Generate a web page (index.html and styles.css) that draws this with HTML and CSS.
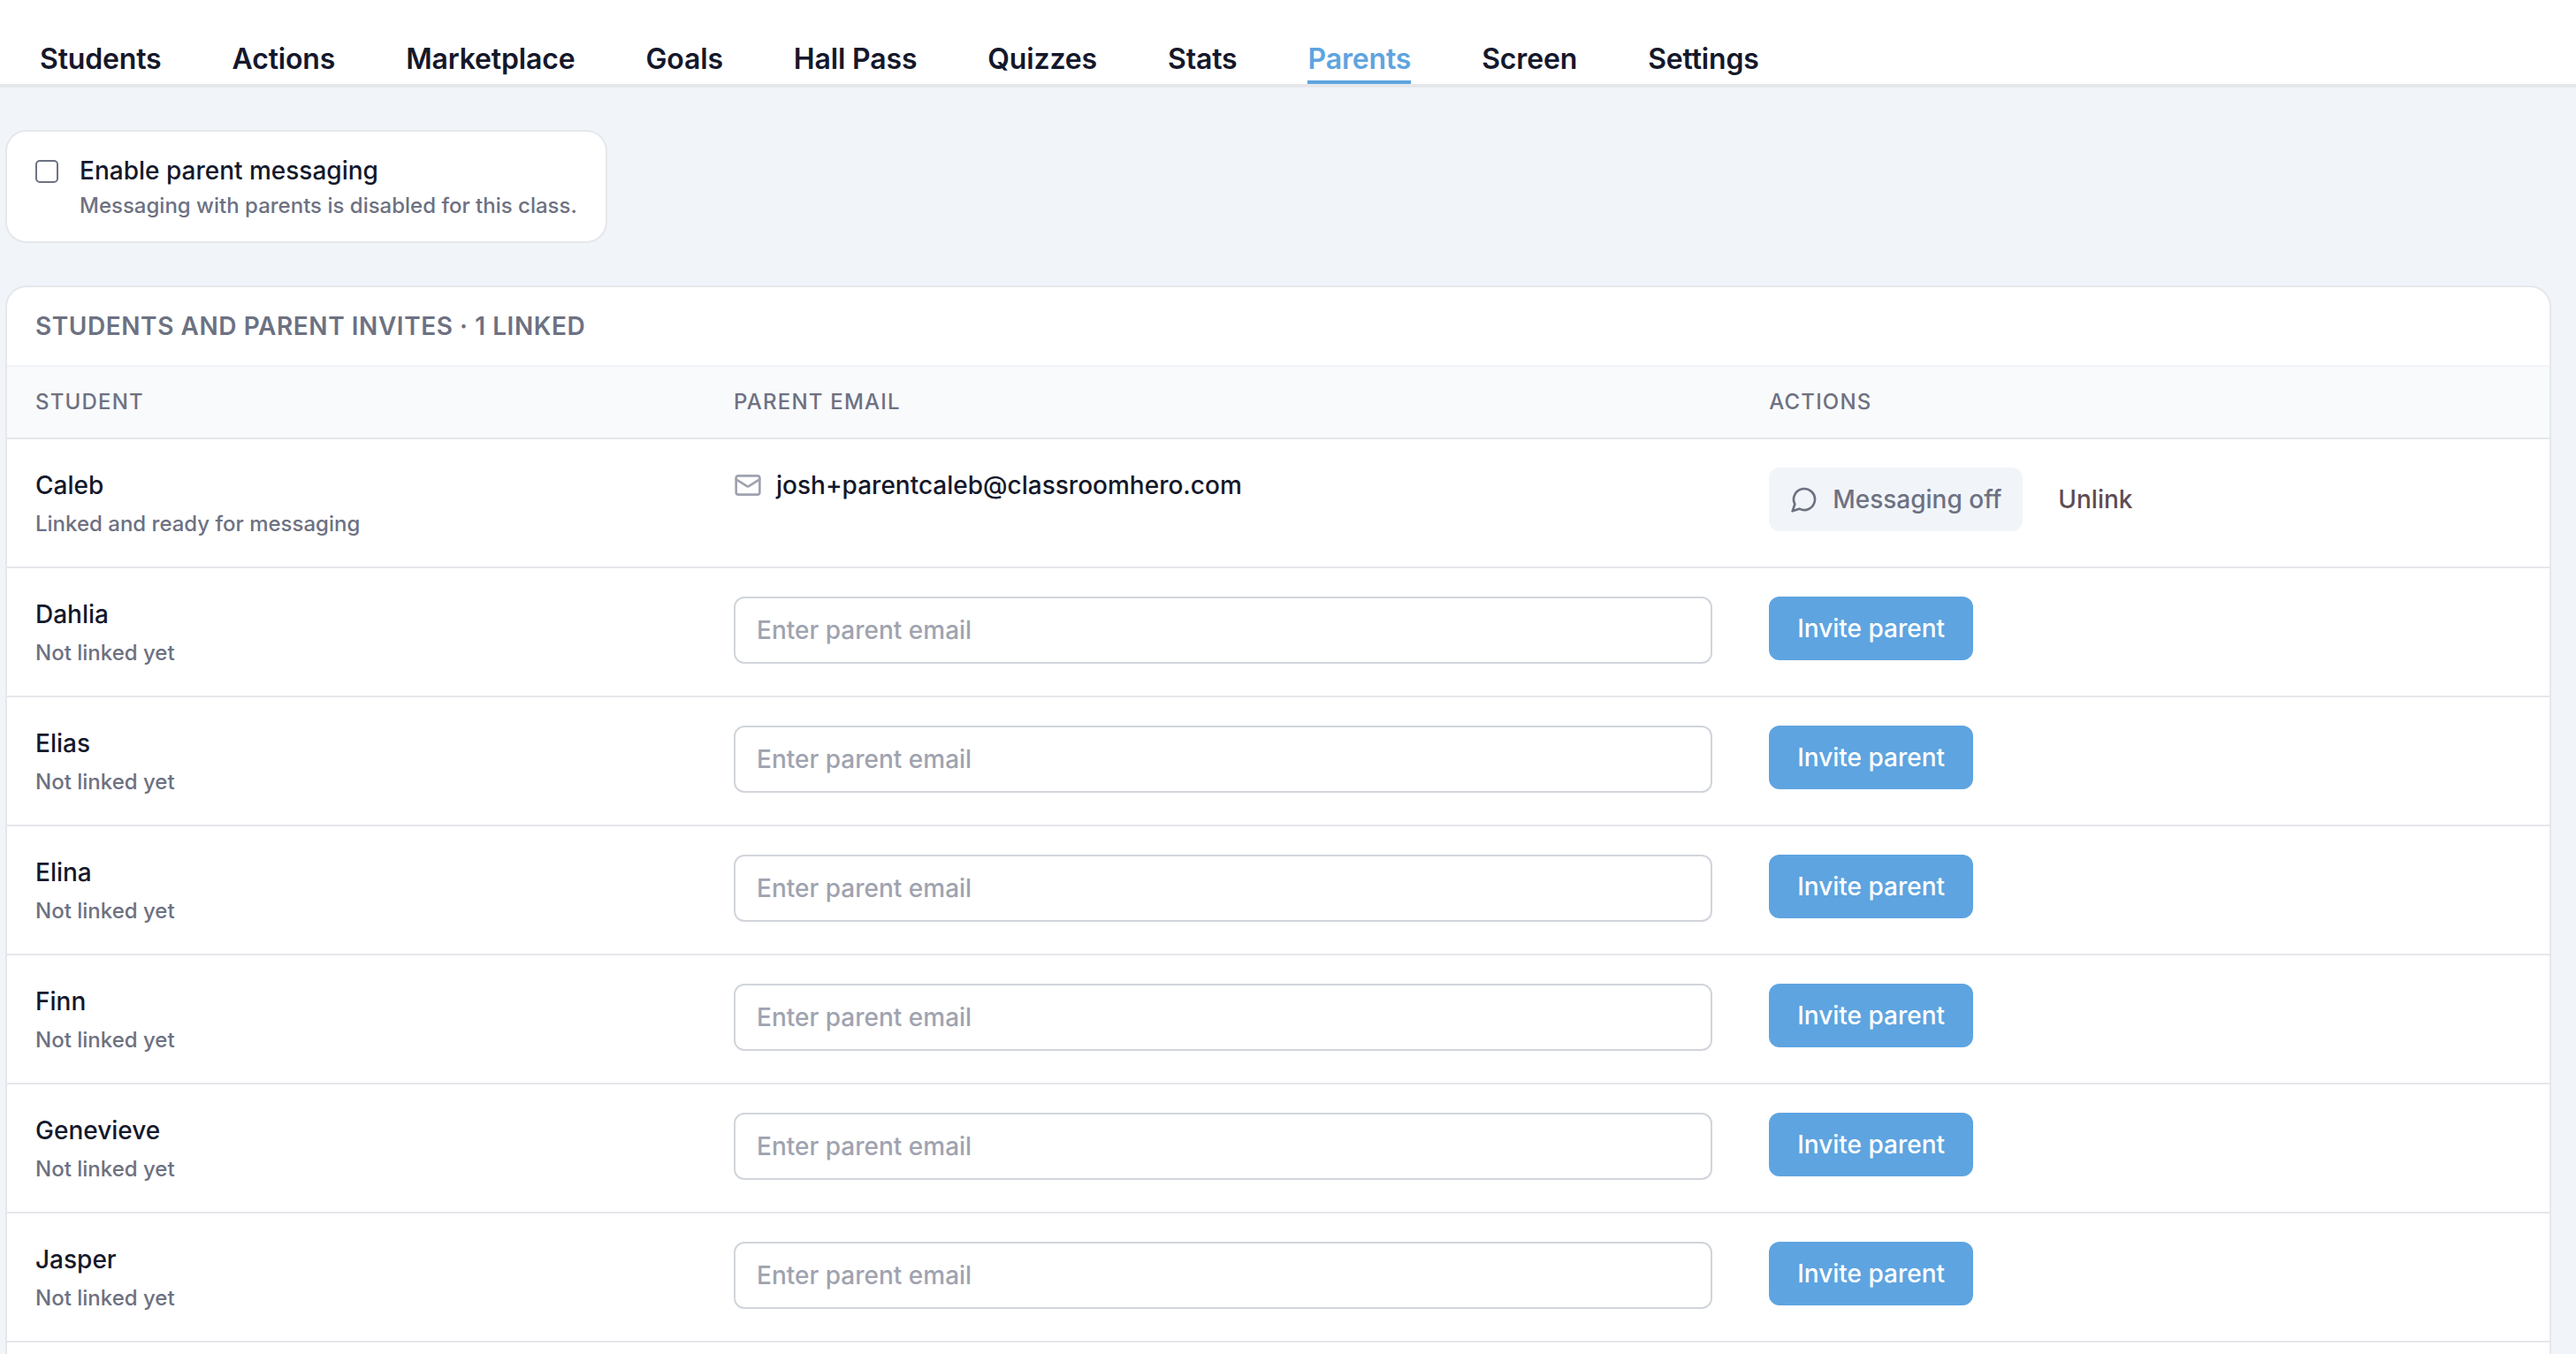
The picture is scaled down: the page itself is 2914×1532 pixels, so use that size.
FILE: index.html
```html
<!DOCTYPE html>
<html lang="en">

<head>
    <meta charset="utf-8" />
    <meta name="viewport" content="width=device-width, initial-scale=1.0" />
    <title>Parents</title>
    <link rel="stylesheet" href="styles.css">
</head>

<body>
    <header class="topbar">
        <nav class="tabs">
            <a class="tab" href="#students">Students</a>
            <a class="tab" href="#actions">Actions</a>
            <a class="tab" href="#marketplace">Marketplace</a>
            <a class="tab" href="#goals">Goals</a>
            <a class="tab" href="#hall-pass">Hall Pass</a>
            <a class="tab" href="#quizzes">Quizzes</a>
            <a class="tab" href="#stats">Stats</a>
            <a class="tab active" href="#parents" aria-current="page">Parents</a>
            <a class="tab" href="#screen">Screen</a>
            <a class="tab" href="#settings">Settings</a>
        </nav>
    </header>

    <main class="content">
        <div class="messaging-card">
            <input type="checkbox" id="enableMessaging" class="checkbox" aria-describedby="messagingHint">
            <div>
                <label class="name" for="enableMessaging">Enable parent messaging</label>
                <div class="messaging-hint" id="messagingHint">Messaging with parents is disabled for this class.</div>
            </div>
        </div>

        <section class="invites">
            <h2 class="invites-title">Students and parent invites · 1 linked</h2>
            <table class="invites-table">
                <colgroup>
                    <col class="col-student">
                    <col class="col-email">
                    <col class="col-actions">
                </colgroup>
                <thead>
                    <tr>
                        <th scope="col">Student</th>
                        <th scope="col">Parent email</th>
                        <th scope="col">Actions</th>
                    </tr>
                </thead>
                <tbody>
                    <tr>
                        <td>
                            <div class="name">Caleb</div>
                            <div class="status">Linked and ready for messaging</div>
                        </td>
                        <td>
                            <div class="linked-email">
                                <svg class="icon icon-mail" viewBox="0 0 24 24" aria-hidden="true">
                                    <rect x="2" y="4" width="20" height="16" rx="2" />
                                    <path d="m22 7-8.97 5.7a1.94 1.94 0 0 1-2.06 0L2 7" />
                                </svg>
                                <span>josh+parentcaleb@classroomhero.com</span>
                            </div>
                        </td>
                        <td>
                            <div class="actions">
                                <button type="button" class="btn btn-muted">
                                    <svg class="icon" viewBox="0 0 24 24" aria-hidden="true">
                                        <path d="M7.9 20A9 9 0 1 0 4 16.1L2 22Z" />
                                    </svg>
                                    Messaging off
                                </button>
                                <button type="button" class="btn btn-unlink">Unlink</button>
                            </div>
                        </td>
                    </tr>
                    <tr>
                        <td>
                            <div class="name">Dahlia</div>
                            <div class="status">Not linked yet</div>
                        </td>
                        <td><input type="email" class="email-input" placeholder="Enter parent email" aria-label="Parent email for Dahlia"></td>
                        <td><button type="button" class="btn btn-invite">Invite parent</button></td>
                    </tr>
                    <tr>
                        <td>
                            <div class="name">Elias</div>
                            <div class="status">Not linked yet</div>
                        </td>
                        <td><input type="email" class="email-input" placeholder="Enter parent email" aria-label="Parent email for Elias"></td>
                        <td><button type="button" class="btn btn-invite">Invite parent</button></td>
                    </tr>
                    <tr>
                        <td>
                            <div class="name">Elina</div>
                            <div class="status">Not linked yet</div>
                        </td>
                        <td><input type="email" class="email-input" placeholder="Enter parent email" aria-label="Parent email for Elina"></td>
                        <td><button type="button" class="btn btn-invite">Invite parent</button></td>
                    </tr>
                    <tr>
                        <td>
                            <div class="name">Finn</div>
                            <div class="status">Not linked yet</div>
                        </td>
                        <td><input type="email" class="email-input" placeholder="Enter parent email" aria-label="Parent email for Finn"></td>
                        <td><button type="button" class="btn btn-invite">Invite parent</button></td>
                    </tr>
                    <tr>
                        <td>
                            <div class="name">Genevieve</div>
                            <div class="status">Not linked yet</div>
                        </td>
                        <td><input type="email" class="email-input" placeholder="Enter parent email" aria-label="Parent email for Genevieve"></td>
                        <td><button type="button" class="btn btn-invite">Invite parent</button></td>
                    </tr>
                    <tr>
                        <td>
                            <div class="name">Jasper</div>
                            <div class="status">Not linked yet</div>
                        </td>
                        <td><input type="email" class="email-input" placeholder="Enter parent email" aria-label="Parent email for Jasper"></td>
                        <td><button type="button" class="btn btn-invite">Invite parent</button></td>
                    </tr>
                </tbody>
            </table>
        </section>
    </main>
</body>

</html>
```
FILE: styles.css
```css
* {
    box-sizing: border-box;
}

body {
    margin: 0;
    min-height: 100vh;
    display: flex;
    flex-direction: column;
    font-family: 'Inter', 'Liberation Sans', sans-serif;
    font-size: 28px;
    line-height: 40px;
    font-weight: 500;
    color: #14182b;
    background-color: #f1f5fa;
}

/* Top tabs */
.topbar {
    padding: 43px 45px 0;
    background: #ffffff;
    border-bottom: 4px solid #e5e7eb;
}

.tabs {
    display: flex;
    gap: 80px;
}

.tab {
    font-size: 32px;
    line-height: 48px;
    font-weight: 600;
    letter-spacing: -0.005em;
    color: inherit;
    text-decoration: none;
    white-space: nowrap;
    border-bottom: 4px solid transparent;
}

.tab.active {
    color: #5ea4e0;
    border-bottom-color: #5ea4e0;
}

.content {
    flex: 1;
    display: flex;
    flex-direction: column;
    align-items: flex-start;
    gap: 48px;
    padding: 48px 28px 0 6px;
}

/* Messaging switch */
.messaging-card {
    display: flex;
    align-items: flex-start;
    gap: 24px;
    padding: 24px 32px;
    background: #ffffff;
    border: 2px solid #e5e7eb;
    border-radius: 24px;
}

.messaging-card .name {
    display: block;
}

.messaging-hint {
    margin-top: 4px;
    font-size: 24px;
    line-height: 32px;
    color: #6d7182;
}

.checkbox {
    appearance: none;
    width: 26px;
    height: 26px;
    margin: 8px 0 0;
    background: #ffffff;
    border: 2px solid #6d7182;
    border-radius: 5px;
}

.checkbox:checked {
    background: #5ea4e0;
}

/* Invites table */
.invites {
    flex: 1;
    width: 100%;
    background: #ffffff;
    border: 2px solid #e5e7eb;
    border-bottom: 0;
    border-radius: 24px 24px 0 0;
    overflow: hidden;
}

.invites-title {
    margin: 0;
    padding: 24px 32px;
    font-size: 28px;
    font-weight: 600;
    letter-spacing: 0.02em;
    text-transform: uppercase;
    color: #6d7182;
    border-bottom: 2px solid #f1f5f9;
}

.invites-table {
    width: 100%;
    table-layout: fixed;
    border-spacing: 0;
}

.col-student {
    width: 27.47%;
}

.col-email {
    width: 40.72%;
}

.invites-table th {
    padding: 24px 32px;
    font-size: 24px;
    line-height: 32px;
    font-weight: 500;
    letter-spacing: 0.05em;
    text-align: left;
    text-transform: uppercase;
    color: #6d7182;
    background: #f9fafc;
    border-bottom: 2px solid #e5e7eb;
}

.invites-table td {
    padding: 32px;
    vertical-align: top;
    border-bottom: 2px solid #e5e7eb;
}

.status {
    margin-top: 8px;
    font-size: 24px;
    line-height: 32px;
    color: #6d7182;
}

.linked-email {
    display: flex;
    align-items: center;
    gap: 16px;
}

.icon {
    width: 32px;
    height: 32px;
    fill: none;
    stroke: currentColor;
    stroke-width: 2;
    stroke-linecap: round;
    stroke-linejoin: round;
}

.icon-mail {
    color: #9fa3af;
}

.email-input {
    display: block;
    width: 100%;
    height: 76px;
    padding: 0 24px;
    font: inherit;
    color: inherit;
    background: #ffffff;
    border: 2px solid #d1d5db;
    border-radius: 12px;
}

.email-input::placeholder {
    color: #9fa3af;
    opacity: 1;
}

.email-input:focus {
    border-color: #5ea4e0;
    outline: none;
}

.actions {
    display: flex;
    gap: 16px;
}

.btn {
    display: flex;
    align-items: center;
    gap: 16px;
    padding: 16px 24px;
    font: inherit;
    white-space: nowrap;
    border: none;
    border-radius: 12px;
    cursor: pointer;
}

.btn-invite {
    padding: 16px 32px;
    color: #ffffff;
    background: #5ea4e0;
}

.btn-muted {
    color: #6d7182;
    background: #f1f5f9;
}

.btn-unlink {
    color: #5f4b53;
    background: transparent;
}
```
